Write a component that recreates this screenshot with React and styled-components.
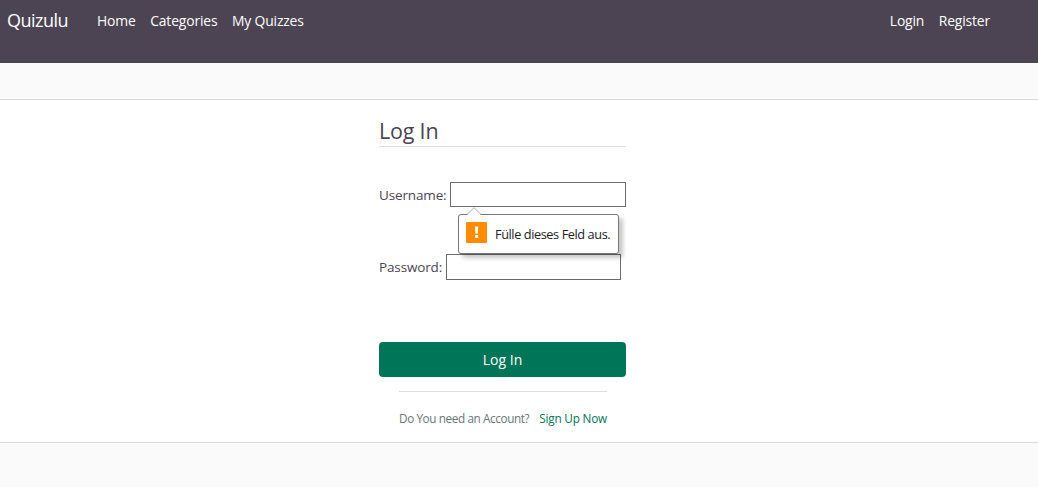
import React from "react";
import styled, { createGlobalStyle } from "styled-components";

const GlobalStyle = createGlobalStyle`
  *, *::before, *::after { box-sizing: border-box; }
  html, body { height: 100%; }
  body {
    margin: 0;
    background: #fafafa;
    color: #4c4452;
    font-family: "Open Sans", "Noto Sans", sans-serif;
    font-size: 14px;
    overflow: hidden;
  }
`;

const Header = styled.header`
  display: flex;
  align-items: flex-start;
  height: 63px;
  padding: 10px 48px 0 7px;
  background: #4c4452;
  color: #fff;
`;

const Brand = styled.a`
  width: 90px;
  font-size: 18px;
  line-height: 21px;
  letter-spacing: -0.5px;
`;

const Nav = styled.nav`
  display: flex;
  gap: 14.5px;
  margin-left: ${(p) => (p.$end ? "auto" : "0")};
`;

const NavLink = styled.a`
  font-size: 13.9px;
  font-weight: 500;
  line-height: 21px;
  letter-spacing: -0.15px;
  white-space: nowrap;
`;

const Panel = styled.main`
  display: flex;
  justify-content: center;
  height: 344px;
  margin-top: 36px;
  padding-right: 33px;
  border-top: 1px solid #dcdcdc;
  border-bottom: 1px solid #dcdcdc;
  background: #fff;
`;

const Form = styled.form`
  display: flex;
  flex-direction: column;
  width: 247px;
  padding-top: 16px;
`;

const Title = styled.h1`
  height: 31px;
  margin: 0 0 35px;
  border-bottom: 1px solid #dee2e6;
  font-size: 21.5px;
  font-weight: 400;
  line-height: 30px;
  letter-spacing: -0.2px;
`;

const Field = styled.div`
  position: relative;
  display: flex;
  align-items: center;
  height: ${(p) => p.$height}px;
  margin-bottom: ${(p) => p.$after}px;
`;

const Label = styled.label`
  width: ${(p) => p.$width}px;
  font-size: 13.5px;
  letter-spacing: -0.14px;
  white-space: nowrap;
`;

const Input = styled.input`
  width: ${(p) => p.$width}px;
  height: 100%;
  padding: 1px 2px;
  border: 1px solid #6b6b6b;
  border-radius: 0;
  background: #fff;
  font: inherit;
  outline: none;
`;

const Tooltip = styled.div`
  position: absolute;
  z-index: 1;
  top: 32px;
  left: 79px;
  display: flex;
  align-items: flex-start;
  gap: 8px;
  width: 161px;
  height: 40px;
  padding: 7px 0 0 7px;
  border: 1px solid #777;
  border-radius: 3px;
  background: #fff;
  box-shadow: 4px 4px 4px rgba(0, 0, 0, 0.22);
  color: #222;
  font-size: 12.75px;
  line-height: 24px;
  letter-spacing: -0.42px;
  white-space: nowrap;
`;

const Arrow = styled.svg`
  position: absolute;
  top: -8px;
  left: 8px;
`;

const SubmitButton = styled.button`
  height: 35px;
  padding: 1px 0 0;
  border: 0;
  border-radius: 4px;
  background: #007558;
  color: #fff;
  font: inherit;
  font-size: 14px;
  font-weight: 500;
  line-height: 34px;
`;

const Footer = styled.div`
  display: flex;
  justify-content: space-between;
  margin: 14px 19px 0 20px;
  padding-top: 18px;
  border-top: 1px solid #dedede;
  color: #6c757d;
  font-size: 11.75px;
  line-height: 17px;
  letter-spacing: -0.4px;
  white-space: nowrap;
`;

const SignUp = styled.a`
  color: #007558;
  letter-spacing: -0.2px;
`;

function ValidationTooltip() {
  return (
    <Tooltip role="alert">
      <Arrow width="14" height="9" viewBox="0 0 14 9">
        <path d="M0 8.5 L7 1 L14 8.5 V9 H0 Z" fill="#fff" />
        <path d="M0 7.5 L7 0.7 L14 7.5" fill="none" stroke="#aaa" />
      </Arrow>
      <svg width="21" height="21" viewBox="0 0 21 21">
        <rect width="21" height="21" rx="1" fill="#ff8c00" />
        <path d="M9 4.5 H12.2 L11.9 11.5 H9.3 Z" fill="#fff" />
        <rect x="9" y="13" width="3.2" height="3" rx="0.8" fill="#fff" />
      </svg>
      <span>Fülle dieses Feld aus.</span>
    </Tooltip>
  );
}

export default function App() {
  return (
    <>
      <GlobalStyle />
      <Header>
        <Brand>Quizulu</Brand>
        <Nav>
          <NavLink>Home</NavLink>
          <NavLink>Categories</NavLink>
          <NavLink>My Quizzes</NavLink>
        </Nav>
        <Nav $end>
          <NavLink>Login</NavLink>
          <NavLink>Register</NavLink>
        </Nav>
      </Header>
      <Panel>
        <Form noValidate>
          <Title>Log In</Title>
          <Field $height={25} $after={47}>
            <Label htmlFor="username" $width={71}>Username:</Label>
            <Input id="username" $width={176} />
            <ValidationTooltip />
          </Field>
          <Field $height={26} $after={62}>
            <Label htmlFor="password" $width={67}>Password:</Label>
            <Input id="password" type="password" $width={175} />
          </Field>
          <SubmitButton type="button">Log In</SubmitButton>
          <Footer>
            <span>Do You need an Account?</span>
            <SignUp>Sign Up Now</SignUp>
          </Footer>
        </Form>
      </Panel>
    </>
  );
}
